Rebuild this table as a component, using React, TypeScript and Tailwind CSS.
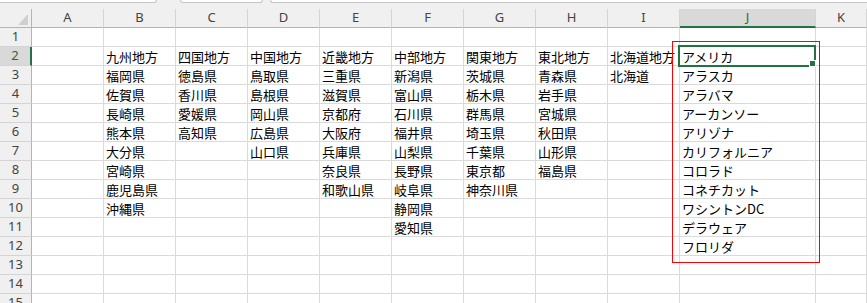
const COLS = ["A", "B", "C", "D", "E", "F", "G", "H", "I", "J", "K"];

// values start at row 2
const DATA: Record<string, string[]> = {
  B: ["九州地方", "福岡県", "佐賀県", "長崎県", "熊本県", "大分県", "宮崎県", "鹿児島県", "沖縄県"],
  C: ["四国地方", "徳島県", "香川県", "愛媛県", "高知県"],
  D: ["中国地方", "鳥取県", "島根県", "岡山県", "広島県", "山口県"],
  E: ["近畿地方", "三重県", "滋賀県", "京都府", "大阪府", "兵庫県", "奈良県", "和歌山県"],
  F: ["中部地方", "新潟県", "富山県", "石川県", "福井県", "山梨県", "長野県", "岐阜県", "静岡県", "愛知県"],
  G: ["関東地方", "茨城県", "栃木県", "群馬県", "埼玉県", "千葉県", "東京都", "神奈川県"],
  H: ["東北地方", "青森県", "岩手県", "宮城県", "秋田県", "山形県", "福島県"],
  I: ["北海道地方", "北海道"],
  J: [
    "アメリカ",
    "アラスカ",
    "アラバマ",
    "アーカンソー",
    "アリゾナ",
    "カリフォルニア",
    "コロラド",
    "コネチカット",
    "ワシントンDC",
    "デラウェア",
    "フロリダ",
  ],
};

const ROWS = Array.from({ length: 15 }, (_, i) => i + 1);
const headFont = { fontFamily: '"Noto Sans", "Liberation Sans", sans-serif' };
const cellFont = { fontFamily: '"Noto Sans CJK JP", "Noto Sans", sans-serif' };

function value(col: string, row: number) {
  const list = DATA[col];
  if (!list) return "";
  return list[row - 2] ?? "";
}

export default function App() {
  return (
    <div className="relative h-[303px] w-[867px] overflow-hidden bg-white">
      {/* bottom edge of the name box / formula bar */}
      <div className="flex h-[9px] gap-0 bg-[#f0f0f0]">
        <div className="h-[3px] w-[157px] rounded-br-[4px] border-b border-r border-[#c6c6c6] bg-white" />
        <div className="ml-[23px] h-[3px] w-[83px] rounded-b-[4px] border-x border-b border-[#c6c6c6] bg-white" />
        <div className="ml-[7px] h-[3px] flex-1 rounded-bl-[4px] border-b border-l border-[#c6c6c6] bg-white" />
      </div>

      <div className="grid grid-cols-[32px_repeat(9,72px)_136px_1fr]">
        {/* corner */}
        <div className="flex h-[19px] items-end justify-end border-b border-r border-[#b4b4b4] bg-[#f0f0f0] pb-[2px] pr-[3px]">
          <svg width="10" height="11" viewBox="0 0 10 11">
            <path d="M10 0 L10 11 L0 11 Z" fill="#d0d0d0" />
          </svg>
        </div>
        {COLS.map((c) =>
          c === "J" ? (
            <div
              key={c}
              style={headFont}
              className="flex h-[19px] items-center justify-center border-b-2 border-r border-b-[#217346] border-r-[#d4d4d4] bg-[#d9d9d9] text-[13px] text-[#1d6b40]"
            >
              {c}
            </div>
          ) : (
            <div
              key={c}
              style={headFont}
              className="flex h-[19px] items-center justify-center border-b border-r border-b-[#b4b4b4] border-r-[#d4d4d4] bg-[#f0f0f0] text-[13px] text-[#444]"
            >
              {c}
            </div>
          )
        )}

        {ROWS.map((r) => (
          <Row key={r} r={r} />
        ))}
      </div>

      {/* red frame around the country list */}
      <div className="pointer-events-none absolute left-[672px] top-[41px] h-[222px] w-[148px] border border-[#ff0000]" />
    </div>
  );
}

function Row({ r }: { r: number }) {
  const active = r === 2;
  return (
    <>
      <div
        style={headFont}
        className={
          active
            ? "flex h-[19px] items-center justify-center border-b border-r-2 border-b-[#d4d4d4] border-r-[#217346] bg-[#d9d9d9] text-[13px] text-[#1d6b40]"
            : "flex h-[19px] items-center justify-center border-b border-r border-b-[#d4d4d4] border-r-[#b4b4b4] bg-[#f0f0f0] text-[13px] text-[#444]"
        }
      >
        {r}
      </div>
      {COLS.map((c) => (
        <div
          key={c}
          style={cellFont}
          className="relative h-[19px] whitespace-nowrap border-b border-r border-[#dadada] pl-[2px] pt-px text-[13px] leading-[17px] text-black"
        >
          {value(c, r)}
          {active && c === "J" && (
            <div className="absolute -bottom-[2px] -left-[2px] -right-px -top-[2px] z-10 border-2 border-[#217346]">
              <div className="absolute -bottom-[2px] -right-[2px] h-[7px] w-[7px] border border-white bg-[#217346]" />
            </div>
          )}
        </div>
      ))}
    </>
  );
}
